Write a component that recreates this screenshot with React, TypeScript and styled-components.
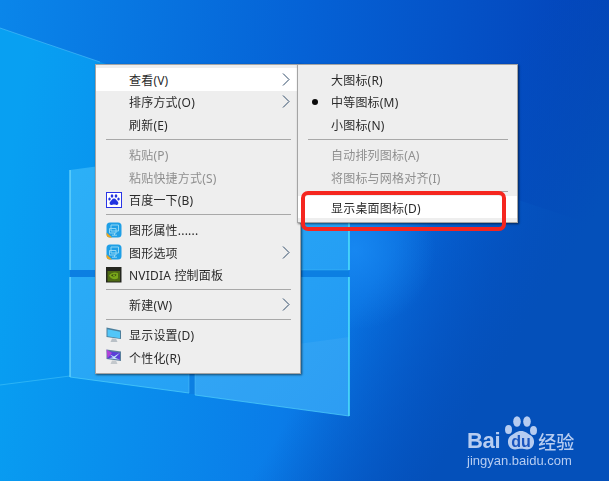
import styled, { createGlobalStyle } from 'styled-components';
import { ReactElement } from 'react';

const GlobalStyle = createGlobalStyle`
  html, body {
    margin: 0;
    padding: 0;
    overflow: hidden;
  }
`;

const Desktop = styled.div`
  position: relative;
  width: 609px;
  height: 481px;
  overflow: hidden;
  background: #0a86e6;
  font-family: 'Noto Sans', 'Noto Sans CJK SC', sans-serif;
  font-size: 12px;
  color: #2b2b2b;
`;

const Wallpaper = styled.svg`
  position: absolute;
  inset: 0;
  display: block;
  filter: blur(0.6px);
`;

const Menu = styled.div<{ $left: number; $width: number }>`
  position: absolute;
  left: ${(p) => p.$left}px;
  top: 64px;
  width: ${(p) => p.$width}px;
  box-sizing: border-box;
  padding: 3px 0 4px;
  background: #eeeeee;
  border: 1px solid #a4a4a4;
  box-shadow: 1px 1px 2px rgba(0, 0, 0, 0.55);
  filter: blur(0.4px);
`;

const Row = styled.div<{ $active?: boolean; $disabled?: boolean; $indent: number }>`
  position: relative;
  display: flex;
  align-items: center;
  box-sizing: border-box;
  height: 22.6px;
  padding: 1px 0 0 ${(p) => p.$indent}px;
  background: ${(p) => (p.$active ? '#ffffff' : 'transparent')};
  color: ${(p) => (p.$disabled ? '#8f8f8f' : '#2b2b2b')};
  letter-spacing: 0.2px;
  white-space: nowrap;
`;

const IconSlot = styled.span`
  position: absolute;
  left: 9.500px;
  top: 3.300px;
  width: 16px;
  height: 16px;
`;

const Chevron = styled.svg`
  position: absolute;
  right: 10px;
  top: 4.800px;
`;

const Dot = styled.span`
  position: absolute;
  left: 14px;
  top: 8.300px;
  width: 6px;
  height: 6px;
  border-radius: 50%;
  background: #0a0a0a;
`;

const Separator = styled.div<{ $inset: number }>`
  height: 1px;
  margin: 3px ${(p) => p.$inset}px 3.400px;
  background: #a8a8a8;
`;

const Highlight = styled.div`
  position: absolute;
  left: 301px;
  top: 191px;
  width: 205px;
  height: 40px;
  box-sizing: border-box;
  border: 4px solid #f5261f;
  border-radius: 7px;
  filter: blur(0.3px);
`;

const Watermark = styled.div`
  position: absolute;
  left: 467px;
  top: 416px;
  width: 112px;
  color: #b6ccf1;
  filter: blur(0.3px);
`;

const BrandLine = styled.div`
  display: flex;
  align-items: flex-end;
  height: 36px;
`;

const BrandLatin = styled.span`
  font-family: 'Liberation Sans', sans-serif;
  font-size: 22px;
  font-weight: 700;
  line-height: 20px;
  letter-spacing: -0.300px;
  margin-bottom: 1px;
`;

const BrandPaw = styled.svg`
  margin: 0 -1px 0 4px;
  flex-shrink: 0;
`;

const BrandCn = styled.span`
  font-family: 'Noto Sans CJK SC', sans-serif;
  font-size: 18px;
  font-weight: 500;
  line-height: 20px;
  margin-bottom: 1px;
`;

const BrandUrl = styled.div`
  font-family: 'Liberation Sans', sans-serif;
  font-size: 13px;
  line-height: 16px;
  margin-top: 1px;
  white-space: nowrap;
`;

const ChevronIcon = (): ReactElement => (
  <Chevron width="8" height="13" viewBox="0 0 8 13">
    <path d="M1 .5 7 6.500 1 12.500" fill="none" stroke="#2f4a68" strokeWidth="1" />
  </Chevron>
);

const BaiduIcon = (): ReactElement => (
  <svg width="16" height="16" viewBox="0 0 16 16">
    <rect x=".5" y=".5" width="15" height="15" fill="#fff" stroke="#2a35e6" />
    <g fill="#2233e0">
      <ellipse cx="6" cy="4" rx="1.300" ry="1.700" />
      <ellipse cx="10" cy="4" rx="1.300" ry="1.700" />
      <ellipse cx="3.500" cy="7" rx="1.200" ry="1.600" />
      <ellipse cx="12.500" cy="7" rx="1.200" ry="1.600" />
      <path d="M8 6.500c2 0 2.300 2 3.600 3 1.300 1 .9 3.500-1.200 3.500-1 0-1.400-.4-2.400-.4s-1.400.4-2.400.4c-2.100 0-2.500-2.500-1.200-3.500 1.300-1 1.600-3 3.600-3z" />
    </g>
  </svg>
);

const GraphicsIcon = (): ReactElement => (
  <svg width="16" height="16" viewBox="0 0 16 16">
    <rect width="15" height="15" x=".5" y=".5" rx="3.500" fill="#1f9fe6" />
    <path d="M.5 10.500 6 15.500H4Q.5 15.500.5 12z" fill="#efa51f" />
    <path d="M5 3h7.500v6H5zM3.500 6.500H10v4.500H3.500zM8.500 11v2M6 13.200h5" fill="none" stroke="#8fd6f4" strokeWidth="1" />
  </svg>
);

const NvidiaIcon = (): ReactElement => (
  <svg width="16" height="16" viewBox="0 0 16 16">
    <rect width="15.500" height="15.500" fill="#24261f" />
    <rect x="1.500" y="4" width="12.500" height="10.500" fill="#4e6a14" />
    <path d="M3 8.500c2-3 6-3.800 9-2.300v5c-3 1.700-7 1.300-9-2.700z" fill="#7aa81a" />
    <path d="M5 8.500c1.500-1.700 4-2 5.500-.7-1 1.900-3.500 2.300-5.500.7z" fill="#3b4f10" />
    <circle cx="8" cy="8.200" r=".9" fill="#8ab820" />
  </svg>
);

const DisplayIcon = (): ReactElement => (
  <svg width="16" height="16" viewBox="0 0 16 16">
    <path d="M.5.5 15 3.500V12L.5 10z" fill="#4d7f9c" />
    <path d="M1.500 2.300 14 4.800v6.400L1.500 9.300z" fill="#52c6f8" />
    <path d="M6 11.500h4l1.500 3.500h-7z" fill="#b9c0c6" />
  </svg>
);

const PersonalizeIcon = (): ReactElement => (
  <svg width="16" height="16" viewBox="0 0 16 16">
    <path d="M.5.500 15 2.500V12L.5 10z" fill="#5a7f9c" />
    <path d="M1.500 2 14 3.800v7L1.500 9.200z" fill="#5a3fd8" />
    <path d="M3 5 8 7.500 14 3.800 9 8.800 14 10.800 3 9.200 7 8.300z" fill="#c2e6f7" />
    <path d="M.5.500 6 4 1.500 9.200z" fill="#b044d8" />
    <path d="M6 11.500h4l1.500 3.500h-7z" fill="#c3c8cc" />
  </svg>
);

type Item = {
  label?: string;
  icon?: ReactElement;
  active?: boolean;
  disabled?: boolean;
  more?: boolean;
  dot?: boolean;
};

const mainItems: Item[] = [
  { label: '查看(V)', more: true, active: true },
  { label: '排序方式(O)', more: true },
  { label: '刷新(E)' },
  {},
  { label: '粘贴(P)', disabled: true },
  { label: '粘贴快捷方式(S)', disabled: true },
  { label: '百度一下(B)', icon: <BaiduIcon /> },
  {},
  { label: '图形属性......', icon: <GraphicsIcon /> },
  { label: '图形选项', icon: <GraphicsIcon />, more: true },
  { label: 'NVIDIA 控制面板', icon: <NvidiaIcon /> },
  {},
  { label: '新建(W)', more: true },
  {},
  { label: '显示设置(D)', icon: <DisplayIcon /> },
  { label: '个性化(R)', icon: <PersonalizeIcon /> },
];

const viewItems: Item[] = [
  { label: '大图标(R)' },
  { label: '中等图标(M)', dot: true },
  { label: '小图标(N)' },
  {},
  { label: '自动排列图标(A)', disabled: true },
  { label: '将图标与网格对齐(I)', disabled: true },
  {},
  { label: '显示桌面图标(D)', active: true },
];

const renderItems = (items: Item[], indent: number, inset: number): ReactElement[] =>
  items.map((item, i) =>
    item.label ? (
      <Row key={i} $active={item.active} $disabled={item.disabled} $indent={indent}>
        {item.icon && <IconSlot>{item.icon}</IconSlot>}
        {item.dot && <Dot />}
        {item.label}
        {item.more && <ChevronIcon />}
      </Row>
    ) : (
      <Separator key={i} $inset={inset} />
    )
  );

const App = (): ReactElement => (
  <Desktop>
    <GlobalStyle />
    <Wallpaper width="609" height="481" viewBox="0 0 609 481">
      <defs>
        <linearGradient id="bg" gradientUnits="userSpaceOnUse" x1="0" y1="220" x2="609" y2="320">
          <stop offset="0" stopColor="#08a0f2" />
          <stop offset=".5" stopColor="#0a7ce8" />
          <stop offset=".72" stopColor="#0660d2" />
          <stop offset="1" stopColor="#0342b4" />
        </linearGradient>
        <linearGradient id="top" gradientUnits="userSpaceOnUse" x1="0" y1="0" x2="609" y2="60">
          <stop offset="0" stopColor="#0a86ea" />
          <stop offset=".5" stopColor="#0562d6" />
          <stop offset="1" stopColor="#0342b8" />
        </linearGradient>
        <linearGradient id="low" gradientUnits="userSpaceOnUse" x1="300" y1="400" x2="430" y2="481">
          <stop offset="0" stopColor="#0450ba" stopOpacity="0" />
          <stop offset="1" stopColor="#0450ba" />
        </linearGradient>
        <radialGradient id="glow" gradientUnits="userSpaceOnUse" cx="355" cy="250" r="80">
          <stop offset="0" stopColor="#1a8cf5" stopOpacity=".8" />
          <stop offset="1" stopColor="#1a8cf5" stopOpacity="0" />
        </radialGradient>
        <linearGradient id="pane" gradientUnits="userSpaceOnUse" x1="70" y1="170" x2="349" y2="410">
          <stop offset="0" stopColor="#2cb0f7" />
          <stop offset="1" stopColor="#2298f3" />
        </linearGradient>
      </defs>
      <rect width="609" height="481" fill="url(#bg)" />
      <path d="M0 0H609V230L100 62 0 28z" fill="url(#top)" />
      <rect width="609" height="481" fill="url(#low)" />
      <rect width="609" height="481" fill="url(#glow)" />
      <path d="M0 28 100 62" stroke="#55c4fa" strokeWidth="1" opacity=".55" />
      <path d="M0 385 70 376" stroke="#55d0fa" strokeWidth="1" opacity=".45" />
      <path d="M70 270H349V277H70zM189 277H195V394H189z" fill="#0c7fe2" />
      <g fill="url(#pane)">
        <path d="M70 170 189 154V270H70z" />
        <path d="M195 153 349 133V270H195z" />
        <path d="M70 277H189V393L70 377z" />
        <path d="M195 277H349V416L195 395z" />
      </g>
      <path d="M195 358 349 337V416L195 395z" fill="#ffffff" opacity=".05" />
      <path d="M70 170V270M70 277V377" stroke="#7fe2fb" strokeWidth="1.500" opacity=".7" />
      <path d="M349 133V270M349 277V416" stroke="#4fe2fc" strokeWidth="1.500" />
      <path d="M70 377 189 393M195 395 349 416" stroke="#50d0fa" strokeWidth="1" opacity=".7" />
      <path d="M189 277V393M195 277V395" stroke="#52c0f8" strokeWidth="1" opacity=".5" />
      <path d="M195 270H349" stroke="#4fd0fa" strokeWidth="1" opacity=".3" />
    </Wallpaper>
    <Menu $left={95} $width={206}>
      {renderItems(mainItems, 33, 9.500)}
    </Menu>
    <Menu $left={297} $width={221}>
      {renderItems(viewItems, 33, 9.500)}
    </Menu>
    <Highlight />
    <Watermark>
      <BrandLine>
        <BrandLatin>Bai</BrandLatin>
        <BrandPaw width="35" height="36" viewBox="0 0 35 36">
          <g fill="#b6ccf1">
            <ellipse cx="4.500" cy="13.500" rx="3.500" ry="4.500" />
            <ellipse cx="13" cy="5.500" rx="3.800" ry="5.200" />
            <ellipse cx="23" cy="5.500" rx="3.800" ry="5.200" />
            <ellipse cx="29.500" cy="14.500" rx="3.500" ry="4.500" />
            <path d="M17 15c4.500 0 6.500 2.500 10 4.500 5 3 4 14-4 14-2.500 0-3.500-.7-6-.7s-3.500.7-6 .7c-8 0-9-11-4-14 3.500-2 5.500-4.500 10-4.500z" />
          </g>
          <text x="17" y="31" textAnchor="middle" fontFamily="Liberation Sans" fontSize="16" fontWeight="700" fill="#1a55bf">du</text>
        </BrandPaw>
        <BrandCn>经验</BrandCn>
      </BrandLine>
      <BrandUrl>jingyan.baidu.com</BrandUrl>
    </Watermark>
  </Desktop>
);

export default App;
